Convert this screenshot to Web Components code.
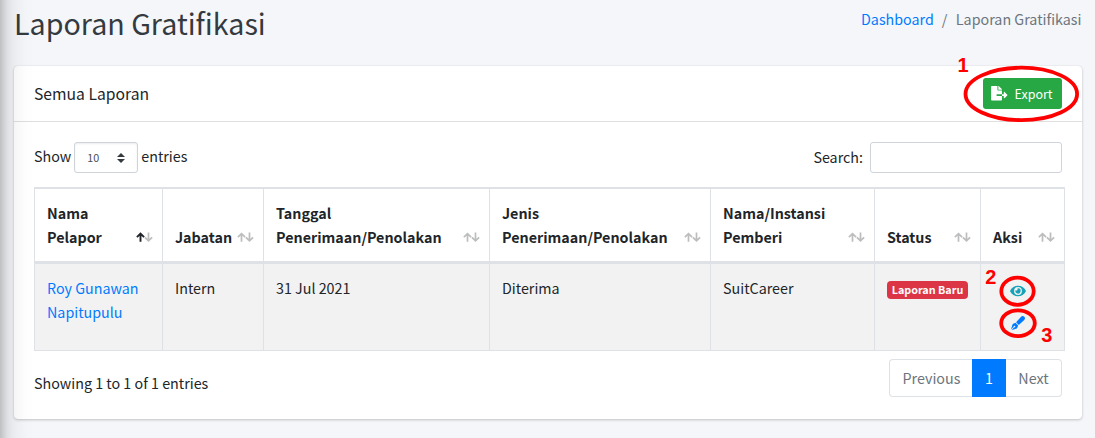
<!DOCTYPE html>
<html lang="id">
<head>
<meta charset="utf-8">
<title>Laporan Gratifikasi</title>
<style>
html,body{margin:0;height:100%;overflow:hidden}
body{background:#f4f6f9;color:#212529;font:400 14.3px/24px "Noto Sans CJK SC","Noto Sans",sans-serif}
</style>
</head>
<body>
<report-page></report-page>
<script>
const define = (name, html) => customElements.define(name, class extends HTMLElement {
  constructor() {
    super();
    const t = document.createElement('template');
    t.innerHTML = html;
    this.attachShadow({mode: 'open'}).append(t.content.cloneNode(true));
  }
});

define('page-header', `<style>
:host{display:flex;justify-content:space-between;height:66px;box-sizing:border-box;padding:5px 0 0 0}
h1{margin:0;font-weight:400;font-size:28.65px;line-height:36px;color:#343a40}
nav{display:flex;margin:2px .5px 0 0;color:#6c757d}
a{color:#007bff}
i{font-style:normal;padding:0 8.4px 0 8px}
</style><h1><slot name="title"></slot></h1><nav><a><slot name="parent"></slot></a><i>/</i><span><slot name="current"></slot></span></nav>`);

define('export-button', `<style>
:host{display:flex;align-items:center;box-sizing:border-box;width:79px;height:31px;padding:0 9px 0 8px;gap:7px;background:#28a745;border-radius:3px;color:#fff;font-size:12.5px;line-height:21px}
svg{width:16.5px;height:14.5px;flex:none}
</style><svg viewBox="0 0 576 512" fill="currentColor"><path d="M384 121.9c0-6.3-2.5-12.4-7-16.9L279.1 7c-4.5-4.5-10.6-7-17-7H256v128h128zM571 308l-95.7-96.4c-10.1-10.1-27.4-3-27.4 11.3V288h-64v64h64v65.2c0 14.3 17.3 21.4 27.4 11.3L571 332c6.6-6.6 6.6-17.4 0-24zm-379 28v-32c0-8.8 7.2-16 16-16h176V160H248c-13.2 0-24-10.8-24-24V0H24C10.7 0 0 10.7 0 24v464c0 13.3 10.7 24 24 24h336c13.3 0 24-10.7 24-24V352H208c-8.8 0-16-7.2-16-16z"/></svg><span><slot></slot></span>`);

define('report-card', `<style>
:host{display:flex;flex-direction:column;box-sizing:border-box;height:353px;background:#fff;border-radius:4px;box-shadow:0 0 1px rgba(0,0,0,.125),0 1px 3px rgba(0,0,0,.2)}
header{display:flex;justify-content:space-between;align-items:center;height:55px;padding:0 20px;border-bottom:1px solid rgba(0,0,0,.125);font-size:15.7px}
.body{padding:20px 20px 0}
</style><header><span><slot name="title"></slot></span><slot name="action"></slot></header><div class="body"><slot></slot></div>`);

define('table-tools', `<style>
:host{display:flex;justify-content:space-between;height:31px;margin-bottom:14px}
div{display:flex;align-items:center}
.label{padding-bottom:3px}
.search{padding-bottom:2px}
.select{box-sizing:border-box;width:64px;height:31px;margin:0 3px;padding:0 12px;border:1px solid #ced4da;border-radius:3px;justify-content:space-between;font-size:10.75px;color:#495057;box-shadow:inset 0 1px 2px rgba(0,0,0,.075)}
.select svg{width:8px;height:10px}
.input{box-sizing:border-box;width:192px;height:31px;margin-left:7px;border:1px solid #ced4da;border-radius:3px}
</style><div><span class="label">Show</span><div class="select"><span>10</span><svg viewBox="0 0 4 5"><path fill="#343a40" d="M2 0L0 2h4zm0 5L0 3h4z"/></svg></div><span class="label">entries</span></div>
<div><span class="search">Search:</span><div class="input"></div></div>`);

define('head-cell', `<style>
:host{display:flex;align-items:flex-end;justify-content:space-between;padding:12px 9px 12px 12px;border-right:1px solid #dee2e6;border-bottom:3px solid #dee2e6;font-weight:700;white-space:nowrap}
svg{width:17px;height:11px;flex:none;margin-bottom:6px;fill:none;stroke:#212529;stroke-width:1.7}
path{opacity:.3}
:host([sorted]) .up{opacity:1;stroke-width:1.9}
</style><span><slot></slot></span><svg viewBox="0 0 17 11"><path class="up" d="M4.5 9.7V1.7M.9 5.2L4.5 1.6 8.1 5.2"/><path d="M12.5 .6V8.8M8.9 5.3l3.6 3.6 3.6-3.6"/></svg>`);

define('body-cell', `<style>
:host{display:block;padding:12px;background:#f2f2f2;border-right:1px solid #dee2e6;border-bottom:1px solid #dee2e6}
</style><slot></slot>`);

define('status-badge', `<style>
:host{display:flex;align-items:center;justify-content:center;width:81px;height:18px;margin-top:5px;border-radius:4px;background:#dc3545;color:#fff;font-weight:700;font-size:10.75px;line-height:18px;white-space:nowrap}
</style><slot></slot>`);

define('row-actions', `<style>
:host{display:flex;flex-direction:column;align-items:center;padding:8px 9.5px 0 0}
svg{display:block}
.eye{width:16px;height:14px;fill:#17a2b8}
.pen{width:14px;height:14px;fill:#007bff;margin-top:18px}
</style><svg class="eye" viewBox="0 0 576 512"><path d="M572.52 241.4C518.29 135.59 410.93 64 288 64S57.68 135.64 3.48 241.41a32.35 32.35 0 0 0 0 29.19C57.71 376.41 165.07 448 288 448s230.32-71.64 284.52-177.41a32.35 32.35 0 0 0 0-29.19zM288 400a144 144 0 1 1 144-144 143.93 143.93 0 0 1-144 144zm0-240a95.31 95.31 0 0 0-25.31 3.79 47.85 47.85 0 0 1-66.9 66.9A95.78 95.78 0 1 0 288 160z"/></svg>
<svg class="pen" viewBox="0 0 512 512"><path d="M79.18 282.94a32.005 32.005 0 0 0-20.24 20.24L0 480l4.69 4.69 92.89-92.89c-.66-2.56-1.57-5.03-1.57-7.8 0-17.67 14.33-32 32-32s32 14.33 32 32-14.33 32-32 32c-2.77 0-5.24-.91-7.8-1.57l-92.89 92.89L32 512l176.82-58.94a31.983 31.983 0 0 0 20.24-20.24l33.07-84.07-98.88-98.88-84.07 33.07zM369.25 28.32L186.14 227.81l97.85 97.85 199.49-183.11C568.4 67.48 443.73-55.94 369.25 28.32z"/></svg>`);

define('report-table', `<style>
:host{display:grid;box-sizing:border-box;width:1031px;grid-template-columns:128px 101px 226px 221px 164px 106px 84px;grid-template-rows:75px 87px;border-left:1px solid #dee2e6;border-top:2px solid #dee2e6}
a{color:#007bff}
</style>
<head-cell sorted>Nama<br>Pelapor</head-cell><head-cell>Jabatan</head-cell><head-cell>Tanggal<br>Penerimaan/Penolakan</head-cell><head-cell>Jenis<br>Penerimaan/Penolakan</head-cell><head-cell>Nama/Instansi<br>Pemberi</head-cell><head-cell>Status</head-cell><head-cell>Aksi</head-cell>
<body-cell><a>Roy Gunawan<br>Napitupulu</a></body-cell><body-cell>Intern</body-cell><body-cell>31 Jul 2021</body-cell><body-cell>Diterima</body-cell><body-cell>SuitCareer</body-cell><body-cell><status-badge>Laporan Baru</status-badge></body-cell><body-cell><row-actions></row-actions></body-cell>`);

define('table-footer', `<style>
:host{display:flex;justify-content:space-between;padding-top:8px}
.info{padding-top:12px}
.pages{display:flex;height:38px;color:#6c757d}
.pages span{box-sizing:border-box;display:flex;align-items:center;justify-content:center;border:1px solid #dee2e6}
.prev{width:83px;border-radius:4px 0 0 4px;border-right:0!important;padding-left:1px}
.on{width:34px;background:#007bff;color:#fff;border-color:#007bff!important}
.next{width:56px;border-radius:0 4px 4px 0;border-left:0!important}
</style><div class="info">Showing 1 to 1 of 1 entries</div><div class="pages"><span class="prev">Previous</span><span class="on">1</span><span class="next">Next</span></div>`);

define('callout-marks', `<style>
:host{position:absolute;inset:0;pointer-events:none}
svg{display:block}
ellipse{fill:none;stroke:#f00}
text{font:700 20px "Liberation Sans",sans-serif;fill:#f00}
</style><svg width="1095" height="438"><ellipse cx="1021.3" cy="93.9" rx="55.8" ry="26.2" stroke-width="3.8"/><ellipse cx="1017.5" cy="291.2" rx="16.2" ry="13.6" stroke-width="3.8"/><ellipse cx="1018" cy="323.2" rx="16.8" ry="12.9" stroke-width="3.8"/><text x="957.5" y="72">1</text><text x="985.3" y="284">2</text><text x="1041.2" y="342">3</text></svg>`);

define('report-page', `<style>
:host{display:block;position:relative;width:1095px;height:438px;overflow:hidden}
main{padding:0 13px 0 14px}
.edge{position:absolute;left:-250px;top:-100px;width:250px;height:700px;box-shadow:0 14px 28px rgba(0,0,0,.25),0 10px 10px rgba(0,0,0,.22)}
</style><main><page-header><span slot="title">Laporan Gratifikasi</span><span slot="parent">Dashboard</span><span slot="current">Laporan Gratifikasi</span></page-header>
<report-card><span slot="title">Semua Laporan</span><export-button slot="action">Export</export-button><table-tools></table-tools><report-table></report-table><table-footer></table-footer></report-card></main>
<div class="edge"></div><callout-marks></callout-marks>`);
</script>
</body>
</html>
